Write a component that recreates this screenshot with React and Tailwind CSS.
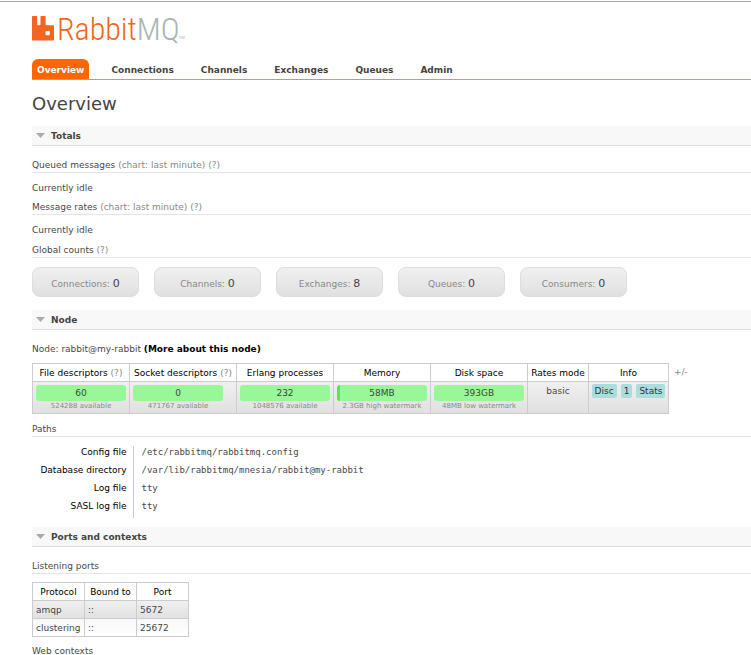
const tabs = ['Overview', 'Connections', 'Channels', 'Exchanges', 'Queues', 'Admin'];

const counts = [
  ['Connections', 0],
  ['Channels', 0],
  ['Exchanges', 8],
  ['Queues', 0],
  ['Consumers', 0],
];

const gauges = [
  { label: 'File descriptors', width: 'w-[97px]', help: true, value: '60', note: '524288 available', used: 0 },
  { label: 'Socket descriptors', width: 'w-[107px]', help: true, value: '0', note: '471767 available', used: 0 },
  { label: 'Erlang processes', width: 'w-[97px]', value: '232', note: '1048576 available', used: 0 },
  { label: 'Memory', width: 'w-[97px]', value: '58MB', note: '2.3GB high watermark', used: 3 },
  { label: 'Disk space', width: 'w-[97px]', value: '393GB', note: '48MB low watermark', used: 0 },
];

const paths = [
  ['Config file', '/etc/rabbitmq/rabbitmq.config'],
  ['Database directory', '/var/lib/rabbitmq/mnesia/rabbit@my-rabbit'],
  ['Log file', 'tty'],
  ['SASL log file', 'tty'],
];

const ports = [
  ['amqp', '::', '5672'],
  ['clustering', '::', '25672'],
];

function Logo() {
  return (
    <svg className="block h-[44px] w-[156px]" viewBox="0 -7 156 44" role="img" aria-label="RabbitMQ">
      <path
        fill="#f26522"
        fillRule="evenodd"
        d="M.6 1h4q.6 0 .6.6V9.400q0 .8.8.8h1.700q.8 0 .8-.8V1.600q0-.6.6-.6h3.900q.6 0 .6.6V9.400q0 .8.8.8h7q.6 0 .6.6v14q0 .6-.6.6H.6q-.6 0-.6-.6V1.600Q0 1 .6 1zM14.200 16q-.7 0-.7.7v2.800q0 .7.7.7h2.900q.7 0 .7-.7v-2.800q0-.7-.7-.7z"
      />
      <text x="25" y="25" fontSize="32" className="font-['Roboto_Condensed','Liberation_Sans_Narrow','Roboto',sans-serif] font-light">
        <tspan fill="#f26522">Rabbit</tspan>
        <tspan fill="#a9b5b2">MQ</tspan>
      </text>
      <text x="147" y="24" fontSize="4" fill="#a9b5b2" className="font-['Liberation_Sans',sans-serif]">TM</text>
    </svg>
  );
}

function Help() {
  return <a href="#help" className="text-[#888]">(?)</a>;
}

function SectionTitle({ children }) {
  return (
    <h2 className="h-5 border-b border-[#ddd] bg-[#f8f8f8] font-bold text-[#444]">
      <button type="button" className="flex h-full items-center gap-1.5 pl-1">
        <svg className="h-[5px] w-[9px]" viewBox="0 0 9 5" aria-hidden="true">
          <path d="M0 0h9L4.500 5z" fill="#aaa" />
        </svg>
        {children}
      </button>
    </h2>
  );
}

function SubTitle({ children, chart, help }) {
  return (
    <h3 className="h-[15px] border-b border-[#e4e4e4]">
      {children}
      {chart && <> <a href="#chart" className="text-[#888]">(chart: last minute)</a></>}
      {help && <> <Help /></>}
    </h3>
  );
}

function Gauge({ value, note, used }) {
  return (
    <div className="w-[90px] text-center">
      <div className="relative h-4 overflow-hidden rounded-[3px] bg-[#98f898] leading-4 text-[#444]">
        <span className="absolute inset-y-0 left-0 bg-[#66dd66]" style={{ width: used + '%' }} />
        <span className="relative">{value}</span>
      </div>
      <div className="text-[7px] leading-[10px] text-[#888]">{note}</div>
    </div>
  );
}

function Tag({ children }) {
  return <span className="rounded-[2px] bg-[#aadddd] px-[3px] leading-[14px] text-[#333]">{children}</span>;
}

export default function App() {
  return (
    <div className="mt-px overflow-hidden border-t border-[#aaa] bg-white pl-8 font-['DejaVu_Sans','Verdana',sans-serif] text-[9px] leading-[14px] text-[#484848]">
      <header>
        <a href="#home" className="mt-[6px] block w-[156px]">
          <Logo />
        </a>
        <nav className="mt-[7px] border-b border-[#f79410]">
          <ul className="flex gap-[17px]">
            {tabs.map((tab, i) => (
              <li key={tab}>
                <a
                  href={'#' + tab.toLowerCase()}
                  className={
                    i === 0
                      ? 'block h-5 rounded-t-md bg-[#ff6600] px-[5px] pt-1 font-bold text-white'
                      : 'block h-5 px-[5px] pt-1 font-bold text-[#444]'
                  }
                >
                  {tab}
                </a>
              </li>
            ))}
          </ul>
        </nav>
      </header>

      <main>
        <h1 className="mt-3 text-[18px] leading-6 text-[#444]">Overview</h1>

        <section className="mt-[10px]">
          <SectionTitle>Totals</SectionTitle>
          <div className="mt-3">
            <SubTitle chart help>Queued messages</SubTitle>
            <p className="mt-2">Currently idle</p>
          </div>
          <div className="mt-[5px]">
            <SubTitle chart help>Message rates</SubTitle>
            <p className="mt-2">Currently idle</p>
          </div>
          <div className="mt-[6px]">
            <SubTitle help>Global counts</SubTitle>
            <div className="mt-[9px] flex flex-wrap gap-[15px]">
              {counts.map(([label, value]) => (
                <div
                  key={label}
                  className="h-[30px] w-[107px] rounded-lg border border-[#ddd] bg-linear-to-b from-[#f0f0f0] to-[#e0e0e0] pt-[9px] text-center text-[#888]"
                >
                  {label}: <span className="text-[11px] text-[#444]">{value}</span>
                </div>
              ))}
            </div>
          </div>
        </section>

        <section className="mt-[13px]">
          <SectionTitle>Node</SectionTitle>
          <p className="mt-3">
            Node: rabbit@my-rabbit <a href="#node" className="font-bold text-black">(More about this node)</a>
          </p>
          <div className="mt-[7px] flex items-start gap-[5px]">
            <table className="border-collapse">
              <thead>
                <tr className="h-[18px]">
                  {gauges.map((g) => (
                    <th key={g.label} className={g.width + ' border border-[#ccc] p-0 text-center font-normal whitespace-nowrap text-black'}>
                      {g.label}
                      {g.help && <> <Help /></>}
                    </th>
                  ))}
                  <th className="w-[61px] border border-[#ccc] p-0 text-center font-normal whitespace-nowrap text-black">Rates mode</th>
                  <th className="w-[80px] border border-[#ccc] p-0 text-center font-normal text-black">Info</th>
                </tr>
              </thead>
              <tbody>
                <tr className="h-8 bg-linear-to-b from-[#f0f0f0] to-[#e0e0e0]">
                  {gauges.map((g) => (
                    <td key={g.label} className="border border-[#ccc] p-[3px] pb-[2px] align-top">
                      <Gauge {...g} />
                    </td>
                  ))}
                  <td className="border border-[#ccc] pt-[2px] text-center align-top">basic</td>
                  <td className="border border-[#ccc] pt-[2px] align-top">
                    <div className="flex justify-center gap-1">
                      <Tag>Disc</Tag>
                      <Tag>1</Tag>
                      <Tag>Stats</Tag>
                    </div>
                  </td>
                </tr>
              </tbody>
            </table>
            <button type="button" className="mt-[2px] text-[#888]">+/-</button>
          </div>

          <div className="mt-2">
            <SubTitle>Paths</SubTitle>
            <table className="mt-[9px] border-collapse leading-[13px]">
              <tbody>
                {paths.map(([label, value]) => (
                  <tr key={label} className="h-[18px]">
                    <th className="w-[101px] border-r border-[#ccc] p-0 pr-[6px] pb-[5px] text-right font-normal whitespace-nowrap text-black">{label}</th>
                    <td className="p-0 pb-[5px] pl-2 font-['DejaVu_Sans_Mono',monospace] whitespace-nowrap">{value}</td>
                  </tr>
                ))}
              </tbody>
            </table>
          </div>
        </section>

        <section className="mt-[9px]">
          <SectionTitle>Ports and contexts</SectionTitle>
          <div className="mt-3">
            <SubTitle>Listening ports</SubTitle>
            <table className="mt-2 border-collapse">
              <thead>
                <tr className="h-[18px] text-black">
                  {['Protocol', 'Bound to', 'Port'].map((label) => (
                    <th key={label} className="w-[52px] border border-[#ccc] p-0 text-center font-normal">{label}</th>
                  ))}
                </tr>
              </thead>
              <tbody>
                {ports.map((row, i) => (
                  <tr
                    key={row[0]}
                    className={
                      i % 2 === 0
                        ? 'h-[18px] bg-linear-to-b from-[#f0f0f0] to-[#e0e0e0]'
                        : 'h-[18px] bg-linear-to-b from-[#f8f8f8] to-white'
                    }
                  >
                    {row.map((cell) => (
                      <td key={cell} className="border border-[#ccc] p-0 pl-[3px]">{cell}</td>
                    ))}
                  </tr>
                ))}
              </tbody>
            </table>
          </div>
          <h3 className="mt-[7px]">Web contexts</h3>
        </section>
      </main>
    </div>
  );
}
